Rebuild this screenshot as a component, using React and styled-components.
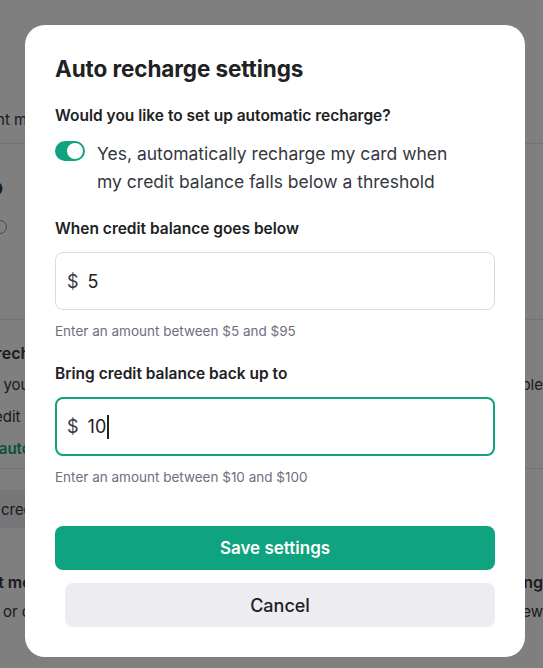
import styled, { createGlobalStyle } from "styled-components";

const GlobalStyle = createGlobalStyle`
  * { box-sizing: border-box; }
  html, body { margin: 0; padding: 0; background: #fff; }
  body {
    font-family: Inter, "Noto Sans", "Liberation Sans", sans-serif;
    color: #202123;
    -webkit-font-smoothing: antialiased;
  }
`;

/* ---------- page behind the dialog ---------- */

const Page = styled.div`
  width: 543px;
  height: 668px;
  overflow: hidden;
  display: flex;
  flex-direction: column;
  padding-top: 110px;
`;

const Tabs = styled.div`
  display: flex;
  height: 34px;
  border-bottom: 1px solid #e5e5e5;
  font-size: 15px;
  color: #353740;
  white-space: nowrap;
`;

const Section = styled.div`
  display: flex;
  flex-direction: column;
  gap: ${(p) => p.$gap || 6}px;
  padding: ${(p) => p.$pad || "20px 0"};
  border-bottom: ${(p) => (p.$line ? "1px solid #e5e5e5" : "none")};
  height: ${(p) => p.$h}px;
`;

const Line = styled.div`
  display: flex;
  justify-content: space-between;
  white-space: nowrap;
  font-size: ${(p) => p.$size || 15}px;
  font-weight: ${(p) => p.$weight || 400};
  color: ${(p) => p.$color || "#353740"};
  line-height: ${(p) => p.$lh || 26}px;
`;

const Edge = styled.span`
  margin-left: ${(p) => p.$shift || 0}px;
`;

const GreyButton = styled.div`
  width: 200px;
  height: 38px;
  margin-left: -110px;
  padding-left: 60px;
  background: #ececf1;
  border-radius: 6px;
  display: flex;
  align-items: center;
  font-size: 15px;
  color: #353740;
  white-space: nowrap;
`;

const InfoIcon = styled.span`
  display: inline-block;
  width: 14px;
  height: 14px;
  border: 1.5px solid #8e8ea0;
  border-radius: 50%;
  margin-left: -7px;
`;

/* ---------- dialog ---------- */

const Overlay = styled.div`
  position: fixed;
  inset: 0;
  background: rgba(0, 0, 0, 0.5);
  display: flex;
  padding: 25px 0 0 25px;
`;

const Dialog = styled.div`
  width: 500px;
  height: 632px;
  background: #fff;
  border-radius: 20px;
  padding: 30px 30px 0;
  display: flex;
  flex-direction: column;
`;

const Title = styled.h2`
  margin: 0;
  font-size: 22.5px;
  font-weight: 700;
  line-height: 28px;
  color: #202123;
  letter-spacing: -0.1px;
`;

const Label = styled.div`
  font-size: 15.5px;
  font-weight: 600;
  line-height: 22px;
  color: #202123;
  margin-top: ${(p) => p.$top || 0}px;
`;

const ToggleRow = styled.label`
  display: flex;
  gap: 12px;
  margin-top: 13px;
  align-items: flex-start;
`;

const Switch = styled.span`
  flex: none;
  width: 30px;
  height: 20px;
  margin-top: 1px;
  border-radius: 10px;
  background: #10a37f;
  display: flex;
  align-items: center;
  justify-content: flex-end;
  padding: 2px;
  &::after {
    content: "";
    width: 16px;
    height: 16px;
    border-radius: 50%;
    background: #fff;
  }
`;

const ToggleText = styled.span`
  max-width: 375px;
  font-size: 17.5px;
  line-height: 28px;
  color: #353740;
`;

const Field = styled.div`
  margin-top: 12px;
  height: ${(p) => (p.$focus ? 59 : 58)}px;
  border-radius: 8px;
  border: ${(p) => (p.$focus ? "2px solid #10a37f" : "1px solid #d9d9e3")};
  padding: 0 ${(p) => (p.$focus ? 10 : 11)}px;
  display: flex;
  align-items: center;
  gap: 9px;
  font-size: 18px;
  color: #202123;
`;

const Currency = styled.span`
  color: #353740;
`;

const Value = styled.span`
  display: flex;
  align-items: center;
`;

const Caret = styled.span`
  width: 1.5px;
  height: 24px;
  background: #202123;
  margin-left: 1px;
`;

const Hint = styled.div`
  margin-top: 12px;
  font-size: 13.5px;
  line-height: 18px;
  color: #6e6e80;
`;

const Button = styled.button`
  height: 44px;
  border: none;
  border-radius: 8px;
  font-family: inherit;
  cursor: pointer;
  background: ${(p) => (p.$primary ? "#10a37f" : "#ececf1")};
  color: ${(p) => (p.$primary ? "#fff" : "#202123")};
  font-size: ${(p) => (p.$primary ? 17 : 18)}px;
  font-weight: ${(p) => (p.$primary ? 600 : 500)};
  margin-top: ${(p) => p.$top}px;
  margin-left: ${(p) => p.$indent || 0}px;
`;

const App = () => {
  return (
    <>
      <GlobalStyle />
      <Page>
        <Tabs>
          <Edge $shift={-52}>Payment methods</Edge>
        </Tabs>
        <Section $h={176} $line $pad="28px 0" $gap={18}>
          <Line $size={24} $weight={700} $lh={30}>
            <Edge $shift={-158}>Pay as you go</Edge>
          </Line>
          <Line>
            <InfoIcon />
          </Line>
        </Section>
        <Section $h={149} $line $pad="20px 0" $gap={0}>
          <Line $size={16} $weight={600}>
            <Edge $shift={-45}>Auto recharge</Edge>
          </Line>
          <Line>
            <Edge $shift={-42}>When your credit</Edge>
            <Edge>enable</Edge>
          </Line>
          <Line>
            <Edge $shift={-20}>credit balance</Edge>
          </Line>
          <Line $color="#10a37f" $weight={600}>
            <Edge $shift={-54}>Enable auto recharge</Edge>
          </Line>
        </Section>
        <Section $pad="21px 0" $h={100}>
          <GreyButton>Add to credit balance</GreyButton>
        </Section>
        <Section $pad="0" $gap={4}>
          <Line $size={16} $weight={600}>
            <Edge $shift={-64}>Payment methods</Edge>
            <Edge>Billing</Edge>
          </Line>
          <Line>
            <Edge $shift={-30}>Add or change</Edge>
            <Edge>View</Edge>
          </Line>
        </Section>
      </Page>
      <Overlay>
        <Dialog>
          <Title>Auto recharge settings</Title>
          <Label $top={22}>Would you like to set up automatic recharge?</Label>
          <ToggleRow>
            <Switch />
            <ToggleText>
              Yes, automatically recharge my card when my credit balance falls
              below a threshold
            </ToggleText>
          </ToggleRow>
          <Label $top={22}>When credit balance goes below</Label>
          <Field>
            <Currency>$</Currency>
            <Value>5</Value>
          </Field>
          <Hint>Enter an amount between $5 and $95</Hint>
          <Label $top={23}>Bring credit balance back up to</Label>
          <Field $focus>
            <Currency>$</Currency>
            <Value>
              10
              <Caret />
            </Value>
          </Field>
          <Hint>Enter an amount between $10 and $100</Hint>
          <Button $primary $top={40}>
            Save settings
          </Button>
          <Button $top={13} $indent={10}>
            Cancel
          </Button>
        </Dialog>
      </Overlay>
    </>
  );
};

export default App;
